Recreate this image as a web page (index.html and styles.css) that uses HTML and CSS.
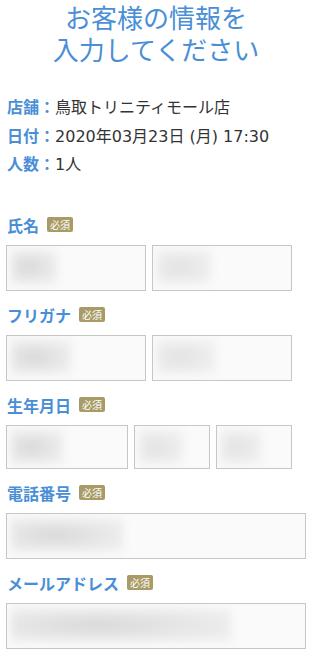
FILE: index.html
```html
<!DOCTYPE html>
<html lang="ja">
<head>
    <meta charset="UTF-8">
    <meta name="viewport" content="width=device-width, initial-scale=1.0">
    <title>お客様の情報を入力してください</title>
    <link rel="stylesheet" href="styles.css">
</head>
<body>
    <div class="page">
        <h1 class="title"><span>お客様の情報を</span><span>入力してください</span></h1>

        <div class="info">
            <p><span class="info-label">店舗：</span>鳥取トリニティモール店</p>
            <p><span class="info-label">日付：</span>2020年03月23日 (月) 17:30</p>
            <p><span class="info-label">人数：</span>1人</p>
        </div>

        <div class="field">
            <div class="field-label">氏名<span class="badge">必須</span></div>
            <div class="row">
                <div class="box"><span class="blur" style="width:46px"></span></div>
                <div class="box"><span class="blur light" style="width:54px"></span></div>
            </div>
        </div>

        <div class="field">
            <div class="field-label">フリガナ<span class="badge">必須</span></div>
            <div class="row">
                <div class="box"><span class="blur" style="width:60px"></span></div>
                <div class="box"><span class="blur light" style="width:58px"></span></div>
            </div>
        </div>

        <div class="field">
            <div class="field-label">生年月日<span class="badge">必須</span></div>
            <div class="row">
                <div class="box box-short"><span class="blur" style="width:52px"></span></div>
                <div class="box box-short"><span class="blur light" style="width:44px"></span></div>
                <div class="box box-short"><span class="blur light" style="width:40px"></span></div>
            </div>
        </div>

        <div class="field">
            <div class="field-label">電話番号<span class="badge">必須</span></div>
            <div class="row">
                <div class="box box-full"><span class="blur" style="width:112px"></span></div>
            </div>
        </div>

        <div class="field">
            <div class="field-label">メールアドレス<span class="badge">必須</span></div>
            <div class="row">
                <div class="box box-full"><span class="blur" style="width:220px"></span></div>
            </div>
        </div>
    </div>
</body>
</html>
```

FILE: styles.css
```css
body {
    margin: 0;
    background-color: #fff;
    font-family: "Noto Sans CJK JP", "Noto Sans", sans-serif;
    color: #333;
}
.page {
    width: 300px;
    padding: 3px 0 0 6px;
}
.title {
    margin: 0;
    font-size: 26px;
    font-weight: 400;
    text-align: center;
    color: #4a8fd6;
}
.title span {
    display: block;
    height: 32px;
    line-height: 28px;
}
.info {
    margin: 26px 0 0 1px;
}
.info p {
    margin: 0;
    font-family: "DejaVu Sans", "Noto Sans CJK JP", sans-serif;
    font-size: 16px;
    line-height: 27.5px;
}
.info-label {
    font-family: "Noto Sans CJK JP", sans-serif;
    font-weight: bold;
    color: #4a8fd6;
}
.field {
    margin-bottom: 14px;
}
.info + .field {
    margin-top: 36px;
}
.field-label {
    display: flex;
    align-items: center;
    height: 20px;
    margin-left: 1px;
    font-size: 16px;
    font-weight: bold;
    color: #4a8fd6;
}
.badge {
    display: inline-block;
    width: 26px;
    height: 15px;
    margin-left: 8px;
    border-radius: 2px;
    background-color: #a89b66;
    color: #fff;
    font-size: 10px;
    line-height: 15px;
    font-weight: normal;
    text-align: center;
}
.row {
    display: flex;
    gap: 6px;
    margin-top: 10px;
}
.box {
    box-sizing: border-box;
    width: 140px;
    height: 46px;
    border: 1px solid #c6c6c6;
    background-color: #fafafa;
    padding: 4px;
    overflow: hidden;
}
.box-short {
    height: 44px;
    width: 76px;
}
.box-short:first-child {
    width: 122px;
}
.box-full {
    width: 300px;
}
.blur {
    display: block;
    height: 34px;
    background: radial-gradient(ellipse at 40% 50%, #d8d8d8 0%, #e6e6e6 45%, #f2f2f2 100%);
    filter: blur(4px);
}
.blur.light {
    background: radial-gradient(ellipse at 40% 50%, #e3e3e3 0%, #ebebeb 50%, #f3f3f3 100%);
}
```
